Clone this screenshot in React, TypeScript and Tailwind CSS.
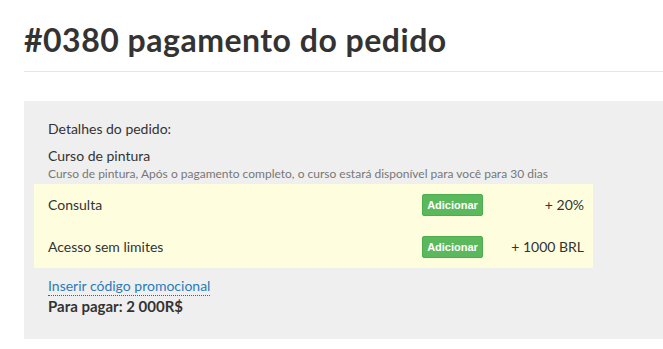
const font = { fontFamily: 'Lato, "Liberation Sans", sans-serif' }

function Extra({ label, price }: { label: string; price: string }): JSX.Element {
  return (
    <div className="flex h-[42px] items-center">
      <span className="flex-1 text-sm leading-5">{label}</span>
      <button
        type="button"
        className="h-[22px] w-[61px] rounded-[2px] border border-[#4cae4c] bg-[#5cb85c] text-[11px] font-bold text-white"
        style={{ fontFamily: '"Liberation Sans", Arial, sans-serif' }}
      >
        Adicionar
      </button>
      <span className="w-[101px] text-right text-sm leading-5">{price}</span>
    </div>
  )
}

function App(): JSX.Element {
  return (
    <div className="min-h-[349px] bg-white pl-6 pt-[21px] text-[#333]" style={font}>
      <h1 className="border-b border-[#e6e6e6] pb-[12px] text-[32px] leading-[38px] font-bold tracking-[0.5px]">
        #0380 pagamento do pedido
      </h1>

      <div className="mt-[29px] bg-[#efefef] pb-6 pl-6 pt-[18px]">
        <p className="text-sm leading-5">Detalhes do pedido:</p>
        <p className="mt-[7px] text-sm leading-5">Curso de pintura</p>
        <p className="mt-px text-xs leading-[14px] text-[#777]">
          Curso de pintura, Após o pagamento completo, o curso estará disponível para você para 30 dias
        </p>

        <div className="-ml-[14px] mt-[3px] w-[559px] bg-[#fefedf] pl-[14px] pr-[9px]">
          <Extra label="Consulta" price="+ 20%" />
          <Extra label="Acesso sem limites" price="+ 1000 BRL" />
        </div>

        <a
          href="#"
          className="mt-2 inline-block border-b border-dotted border-[#1f6aa5] text-sm leading-[19px] text-[#2b7bb9]"
        >
          Inserir código promocional
        </a>
        <p className="text-[15px] leading-[18px] font-bold">Para pagar: 2 000R$</p>
      </div>
    </div>
  )
}

export default App
